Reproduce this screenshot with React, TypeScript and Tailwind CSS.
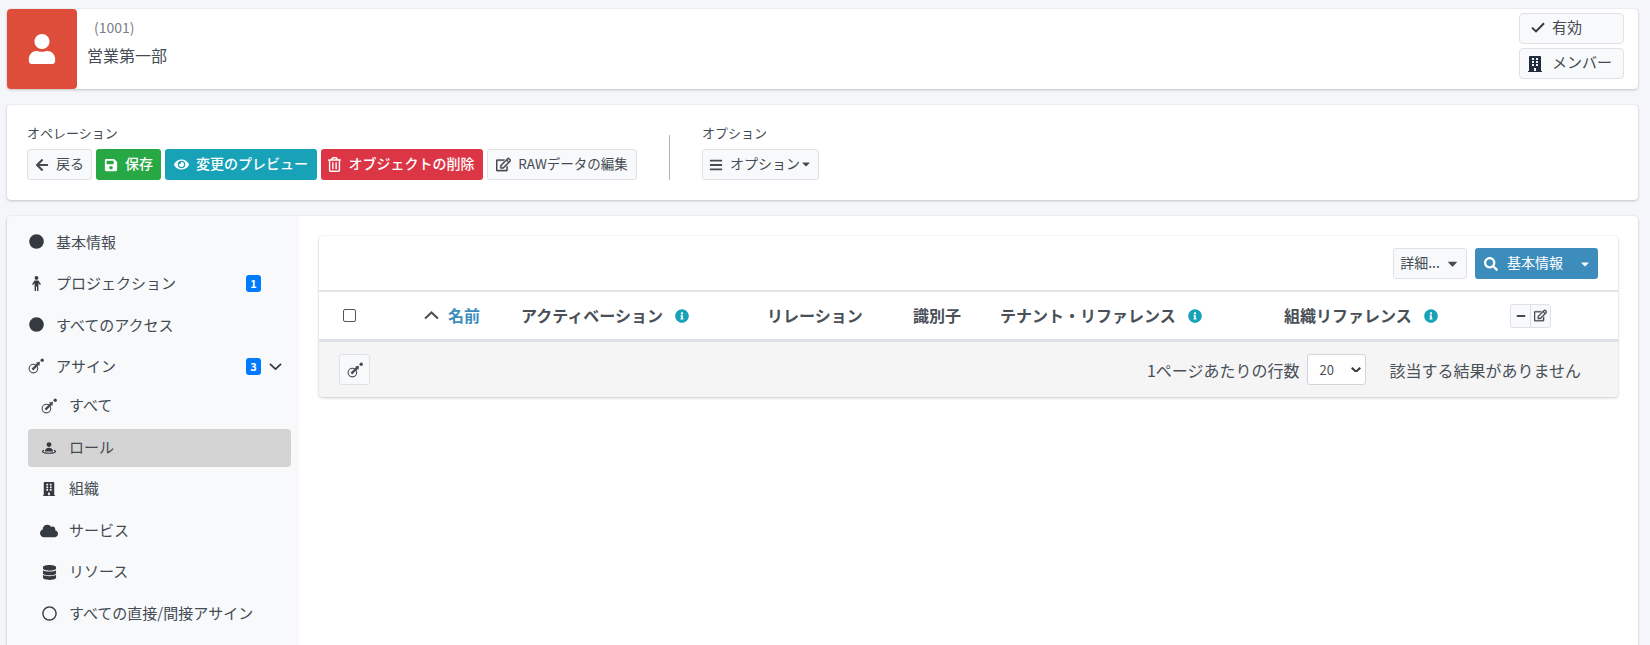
import React from "react";
import {
  FaUser, FaBuilding, FaArrowLeft, FaSave, FaEye, FaRegTrashAlt, FaRegEdit, FaBars,
  FaCaretDown, FaCircle, FaRegCircle, FaSearch, FaCloud, FaDatabase, FaMinus, FaInfoCircle,
} from "react-icons/fa";

const AssignIcon = ({ className = "" }: { className?: string }) => (
  <svg viewBox="0 0 16 16" width="16" height="16" className={className} fill="none">
    <circle cx="5.4" cy="10.6" r="4.3" stroke="currentColor" strokeWidth="1.1" />
    <path d="M4.4 11.6 L10.4 5.6" stroke="currentColor" strokeWidth="2.3" />
    <path d="M8 4.6 L12 3.8 L11.4 8 Z" fill="currentColor" />
    <circle cx="14.2" cy="2.2" r="1.7" fill="currentColor" />
  </svg>
);

const RoleIcon = () => (
  <svg viewBox="0 0 16 16" width="16" height="16" fill="currentColor">
    <circle cx="8" cy="4.6" r="2.4" />
    <path d="M4 11.6c0-2.6 1.8-3.8 4-3.8s4 1.2 4 3.8z" />
    <path d="M1 11.4c0-.9.8-1.4 2-1.7v1.2c-.5.2-.8.4-.8.6 0 .6 2.4 1.2 5.8 1.2s5.8-.6 5.8-1.2c0-.2-.3-.4-.8-.6V9.7c1.2.3 2 .8 2 1.7 0 1.5-3.1 2.4-7 2.4s-7-.9-7-2.4z" />
  </svg>
);

const PersonIcon = () => (
  <svg viewBox="0 0 9 15" width="9" height="15" fill="currentColor">
    <circle cx="4.5" cy="1.9" r="1.9" />
    <path d="M2.6 4.4h3.8L9 8.2 7.9 9 6.4 7v8H5V10.6H4V15H2.6V7L1.1 9 0 8.2z" />
  </svg>
);

const CheckIcon = () => (
  <svg viewBox="0 0 14 11" width="14" height="11" fill="none" stroke="currentColor" strokeWidth="2">
    <path d="M1 5.6 L5 9.4 L13 1.2" />
  </svg>
);

const Chevron = ({ up, size = 14, weight = 1.9, className = "" }: { up?: boolean; size?: number; weight?: number; className?: string }) => (
  <svg viewBox="0 0 14 8" width={size} height={(size * 8) / 14} className={className} fill="none" stroke="currentColor" strokeWidth={weight}>
    <path d={up ? "M1 7 L7 1.4 L13 7" : "M1 1 L7 6.6 L13 1"} />
  </svg>
);

const Btn = ({ w, className, children }: { w: string; className: string; children: React.ReactNode }) => (
  <div className={`flex h-[31px] items-center justify-center gap-[7px] rounded-[3px] text-[14px] [&>span]:mb-[2px] ${w} ${className}`}>
    {children}
  </div>
);

const light = "border border-[#dee2e6] bg-[#f8f9fa] text-[#444b53]";

const NavRow = ({
  icon, label, sub, active, badge, chevron,
}: {
  icon: React.ReactNode; label: string; sub?: boolean; active?: boolean; badge?: string; chevron?: boolean;
}) => (
  <div className={`ml-[21px] mr-[8px] flex items-center ${active ? "my-[2px] h-[38px] rounded-[4px] bg-[#d4d4d4]" : "h-[41.5px]"}`}>
    <div className={`flex shrink-0 items-center justify-center text-[#343a40] ${sub ? "w-[42px]" : "w-[16px]"}`}>{icon}</div>
    <span className={`text-[15px] leading-[22px] text-[#444b53] ${sub ? "-ml-[1px] mb-[2px]" : "ml-[12px]"}`}>{label}</span>
    {badge && (
      <span className={`ml-auto flex h-[17px] w-[15px] items-center justify-center rounded-[3px] bg-[#007bff] text-[11px] font-bold text-white ${chevron ? "mr-[8px]" : "mr-[30px]"}`}>
        {badge}
      </span>
    )}
    {chevron && <Chevron size={13} className="mr-[9px] text-[#343a40]" />}
  </div>
);

const Th = ({ w, label, info, className = "" }: { w: string; label: string; info?: boolean; className?: string }) => (
  <div className={`flex shrink-0 items-center text-[16px] font-bold text-[#495057] ${w} ${className}`}>
    <span className="mb-[2px]">{label}</span>
    {info && <FaInfoCircle className="ml-[12px] text-[14px] text-[#17a2b8]" />}
  </div>
);

export default function App() {
  return (
    <div
      className="h-[645px] w-[1650px] overflow-hidden bg-[#f4f6f9] pl-[7px] pr-[12px] pt-[9px]"
      style={{ fontFamily: '"Noto Sans CJK JP", "Noto Sans", sans-serif' }}
    >
      <div className="flex h-[80px] rounded-[4px] bg-white shadow-[0_0_1px_rgba(0,0,0,0.13),0_1px_3px_rgba(0,0,0,0.2)]">
        <div className="flex w-[70px] shrink-0 items-center justify-center rounded-[4px] bg-[#de4d39] text-white">
          <FaUser className="text-[30px]" />
        </div>
        <div className="ml-[10px] pt-[8px]">
          <div className="ml-[7px] text-[14px] leading-[20px] text-[#7a8087]">(1001)</div>
          <div className="mt-[6px] text-[16px] leading-[24px] text-[#444b53]">営業第一部</div>
        </div>
        <div className="ml-auto mr-[14px] flex w-[105px] flex-col gap-[4px] pt-[4px]">
          <div className={`flex h-[31px] items-center rounded-[4px] pl-[11px] text-[15px] [&>span]:mb-[2px] ${light}`}>
            <span className="mb-0 text-[#343a40]"><CheckIcon /></span>
            <span className="ml-[7px]">有効</span>
          </div>
          <div className={`flex h-[31px] items-center rounded-[4px] pl-[7px] text-[15px] [&>span]:mb-[2px] ${light}`}>
            <FaBuilding className="text-[16px] text-[#1f2d3d]" />
            <span className="ml-[9px]">メンバー</span>
          </div>
        </div>
      </div>

      <div className="mt-[16px] flex h-[95px] rounded-[4px] bg-white pl-[20px] pt-[18px] shadow-[0_0_1px_rgba(0,0,0,0.13),0_1px_3px_rgba(0,0,0,0.2)]">
        <div>
          <div className="text-[13px] leading-[20px] text-[#444b53]">オペレーション</div>
          <div className="mt-[6px] flex gap-[4px]">
            <Btn w="w-[65px]" className={light}><FaArrowLeft className="text-[14px]" /><span>戻る</span></Btn>
            <Btn w="w-[65px]" className="bg-[#28a745] font-medium text-white"><FaSave className="text-[14px]" /><span>保存</span></Btn>
            <Btn w="w-[152px]" className="bg-[#17a2b8] font-medium text-white"><FaEye className="text-[15px]" /><span>変更のプレビュー</span></Btn>
            <Btn w="w-[162px]" className="bg-[#dc3545] pr-[3px] font-medium text-white"><FaRegTrashAlt className="text-[15px]" /><span>オブジェクトの削除</span></Btn>
            <Btn w="w-[150px]" className={light}><FaRegEdit className="stroke-[14] text-[15px]" /><span className="text-[13.5px]">RAWデータの編集</span></Btn>
          </div>
        </div>
        <div className="ml-[32px] mt-[12px] h-[45px] w-px bg-[#adb5bd]" />
        <div className="ml-[32px]">
          <div className="text-[13px] leading-[20px] text-[#444b53]">オプション</div>
          <div className="mt-[6px]">
            <Btn w="w-[117px]" className={light}>
              <FaBars className="text-[14px]" />
              <span className="flex items-center">オプション<FaCaretDown className="text-[12px]" /></span>
            </Btn>
          </div>
        </div>
      </div>

      <div className="mt-[16px] flex h-[500px] rounded-t-[4px] bg-white shadow-[0_0_1px_rgba(0,0,0,0.13),0_1px_3px_rgba(0,0,0,0.2)]">
        <div className="w-[292px] shrink-0 rounded-tl-[4px] bg-[#f8f9fb] pt-[5px]">
          <NavRow icon={<FaCircle className="text-[15px]" />} label="基本情報" />
          <NavRow icon={<PersonIcon />} label="プロジェクション" badge="1" />
          <NavRow icon={<FaCircle className="text-[15px]" />} label="すべてのアクセス" />
          <NavRow icon={<AssignIcon className="text-[#444b53]" />} label="アサイン" badge="3" chevron />
          <div className="-mt-[2px]">
            <NavRow sub icon={<AssignIcon className="text-[#444b53]" />} label="すべて" />
            <NavRow sub active icon={<RoleIcon />} label="ロール" />
            <NavRow sub icon={<FaBuilding className="text-[14px]" />} label="組織" />
            <NavRow sub icon={<FaCloud className="text-[18px]" />} label="サービス" />
            <NavRow sub icon={<FaDatabase className="text-[15px]" />} label="リソース" />
            <NavRow sub icon={<FaRegCircle className="text-[15px]" />} label="すべての直接/間接アサイン" />
          </div>
        </div>

        <div className="min-w-0 flex-1 pl-[20px] pr-[20px] pt-[20px]">
          <div className="h-[161px] rounded-[4px] shadow-[0_0_1px_rgba(0,0,0,0.13),0_1px_3px_rgba(0,0,0,0.2)]">
            <div className="flex h-[56px] items-start justify-end gap-[8px] border-b-2 border-[#e3e5e8] pr-[20px] pt-[12px]">
              <div className={`flex h-[31px] w-[74px] items-center justify-center gap-[5px] rounded-[3px] text-[14px] [&>span]:mb-[2px] ${light}`}>
                <span>詳細...</span><FaCaretDown className="text-[15px]" />
              </div>
              <div className="flex h-[31px] w-[123px] items-center rounded-[3px] bg-[#3c8dbc] pl-[9px] text-[14px] text-white [&>span]:mb-[2px]">
                <FaSearch className="text-[14px]" />
                <span className="ml-[9px]">基本情報</span>
                <FaCaretDown className="ml-[16px] text-[12px]" />
              </div>
            </div>
            <div className="flex h-[50px] items-center border-b-[3px] border-[#dee2e6]">
              <div className="w-[105px] shrink-0 pl-[24px]">
                <div className="h-[13px] w-[13px] rounded-[2px] border border-[#555] bg-white" />
              </div>
              <div className="flex w-[97px] shrink-0 items-center text-[16px] font-bold text-[#3c8dbc]">
                <Chevron up size={15} className="text-[#495057]" />
                <span className="mb-[2px] ml-[9px]">名前</span>
              </div>
              <Th w="w-[246px]" label="アクティベーション" info />
              <Th w="w-[146px]" label="リレーション" />
              <Th w="w-[87px]" label="識別子" />
              <Th w="w-[284px]" label="テナント・リファレンス" info />
              <Th w="w-[226px]" label="組織リファレンス" info />
              <div className="flex h-[24px] w-[41px] shrink-0 rounded-[3px] border border-[#dee2e6] bg-[#f8f9fa] text-[#444b53]">
                <div className="flex flex-1 items-center justify-center border-r border-[#dee2e6]"><FaMinus className="text-[10px]" /></div>
                <div className="flex flex-1 items-center justify-center"><FaRegEdit className="stroke-[14] text-[13px]" /></div>
              </div>
            </div>
            <div className="flex h-[55px] items-center rounded-b-[4px] bg-[#f5f5f6] pl-[20px] pr-[37px]">
              <div className={`flex h-[31px] w-[31px] items-center justify-center rounded-[3px] ${light}`}>
                <AssignIcon className="text-[#444b53]" />
              </div>
              <span className="ml-auto text-[16px] text-[#495057]">1ページあたりの行数</span>
              <div className="ml-[8px] flex h-[31px] w-[59px] items-center justify-between rounded-[3px] border border-[#ced4da] bg-white pl-[11px] pr-[4px] text-[13px] text-[#495057]">
                <span>20</span>
                <Chevron size={10} weight={2.8} className="text-[#343a40]" />
              </div>
              <span className="ml-[23px] text-[16px] text-[#495057]">該当する結果がありません</span>
            </div>
          </div>
        </div>
      </div>
    </div>
  );
}
